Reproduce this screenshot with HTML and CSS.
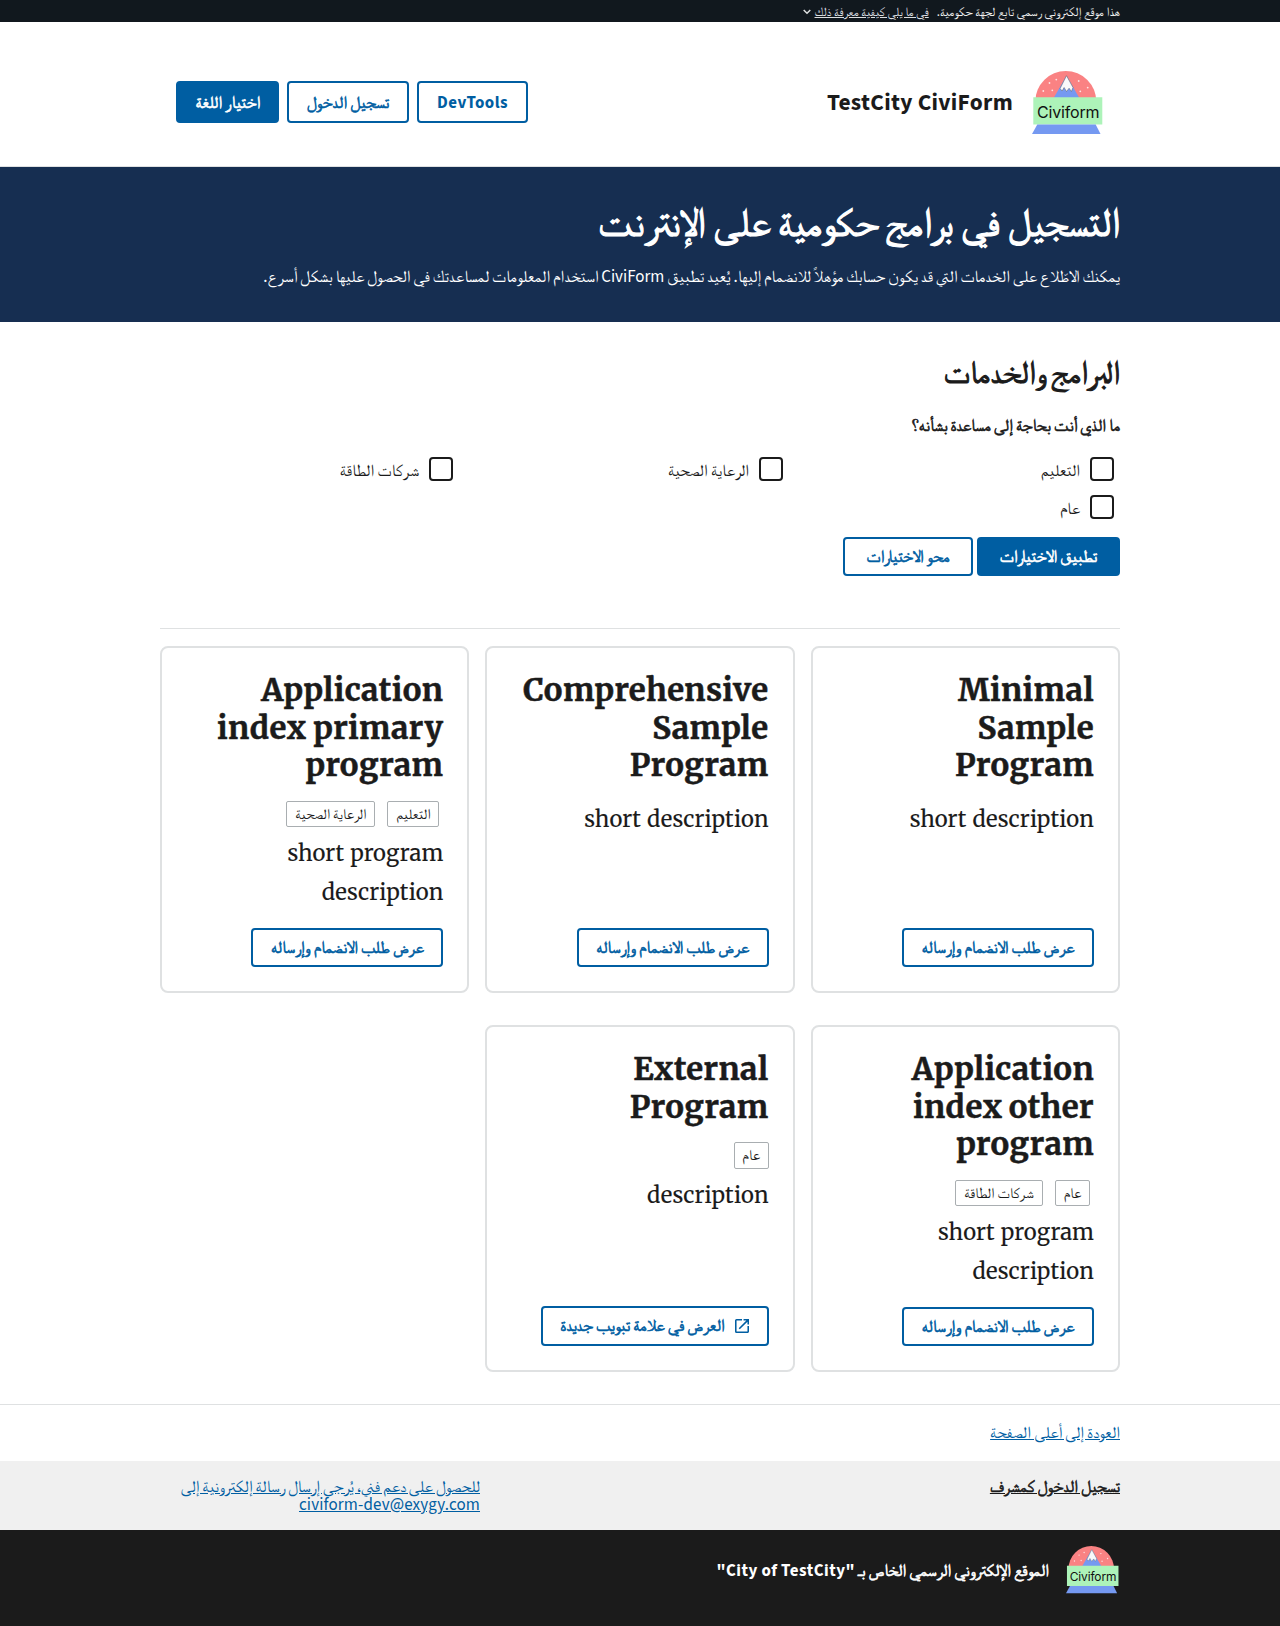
FILE: index.html
```html
<!DOCTYPE html>
<html lang="ar" dir="rtl">
<head>
<meta charset="utf-8">
<title>TestCity CiviForm</title>
<link rel="stylesheet" href="styles.css">
</head>
<body>
<svg width="0" height="0" class="defs" aria-hidden="true">
  <symbol id="logo" viewBox="0 0 71 64">
    <path d="M3.300 30.500a30.500 30.500 0 0 1 61 0z" fill="#fa8283"/>
    <path d="M34.500 4.700 48.500 29h-28z" fill="#7599f1"/>
    <path d="M34.500 4.700 41 16.500l-1.600 4-2.300-3.300-2.600 3.300-2.400-4-2 3.500-2-2.500z" fill="#f8f8fa" stroke="#555b66" stroke-width=".5"/>
    <g fill="#fde4e4"><circle cx="17.500" cy="12" r=".9"/><circle cx="24.300" cy="8.600" r=".9"/><circle cx="11.300" cy="20" r=".9"/><circle cx="20.300" cy="19.300" r=".9"/><circle cx="46.700" cy="10" r=".9"/><circle cx="55.700" cy="16.600" r=".9"/><circle cx="48.300" cy="20.300" r=".9"/></g>
    <path d="M1.300 26.300h69v27.200h-69z" fill="#adf3b9"/>
    <path d="M5.300 53.500h58.400l4.800 9.500H0z" fill="#7599f1"/>
    <text x="5" y="46.800" textLength="62.500" class="logo-text" direction="ltr">Civiform</text>
  </symbol>
</svg>

<div class="gov-banner"><div class="container">
  <span class="t-gov">هذا موقع إلكتروني رسمي تابع لجهة حكومية.</span>
  <a class="t-how">في ما يلي كيفية معرفة ذلك</a>
  <svg class="chev" viewBox="0 0 8 6"><path d="M.7 1 4 4.300 7.300 1" fill="none" stroke="#dfe1e2" stroke-width="1.500"/></svg>
</div></div>

<header class="header"><div class="container">
  <svg class="logo"><use href="#logo"/></svg>
  <span class="brand">TestCity CiviForm</span>
  <nav class="nav">
    <a class="btn nav-dev">DevTools</a>
    <a class="btn strong nav-login">تسجيل الدخول</a>
    <a class="btn strong primary nav-lang">اختيار اللغة</a>
  </nav>
</div></header>

<section class="hero"><div class="container">
  <h1>التسجيل في برامج حكومية على الإنترنت</h1>
  <p>يمكنك الاطّلاع على الخدمات التي قد يكون حسابك مؤهلاً للانضمام إليها. يُعيد تطبيق CiviForm استخدام المعلومات لمساعدتك في الحصول عليها بشكل أسرع.</p>
</div></section>

<main class="container main">
  <h2>البرامج والخدمات</h2>
  <p class="legend strong">ما الذي أنت بحاجة إلى مساعدة بشأنه؟</p>
  <div class="checks">
    <label><i></i><span>التعليم</span></label>
    <label><i></i><span>الرعاية الصحية</span></label>
    <label><i></i><span>شركات الطاقة</span></label>
    <label><i></i><span>عام</span></label>
  </div>
  <div class="actions">
    <a class="btn strong primary apply">تطبيق الاختيارات</a>
    <a class="btn strong clear">محو الاختيارات</a>
  </div>
  <div class="cards">
    <article class="card">
      <h3>Minimal<br>Sample<br>Program</h3>
      <p class="desc spaced">short description</p>
      <a class="btn strong view">عرض طلب الانضمام وإرساله</a>
    </article>
    <article class="card">
      <h3>Comprehensive<br>Sample<br>Program</h3>
      <p class="desc spaced">short description</p>
      <a class="btn strong view">عرض طلب الانضمام وإرساله</a>
    </article>
    <article class="card">
      <h3>Application<br>index primary<br>program</h3>
      <div class="tags"><span class="tag edu">التعليم</span><span class="tag health">الرعاية الصحية</span></div>
      <p class="desc">short program<br>description</p>
      <a class="btn strong view">عرض طلب الانضمام وإرساله</a>
    </article>
    <article class="card">
      <h3>Application<br>index other<br>program</h3>
      <div class="tags"><span class="tag general">عام</span><span class="tag energy">شركات الطاقة</span></div>
      <p class="desc">short program<br>description</p>
      <a class="btn strong view">عرض طلب الانضمام وإرساله</a>
    </article>
    <article class="card">
      <h3>External<br>Program</h3>
      <div class="tags single"><span class="tag general">عام</span></div>
      <p class="desc">description</p>
      <a class="btn strong view external"><svg class="launch" viewBox="3 3 18 18"><path fill="#005ea2" d="M19 19H5V5h7V3H5a2 2 0 0 0-2 2v14a2 2 0 0 0 2 2h14c1.100 0 2-.9 2-2v-7h-2v7zM14 3v2h3.590l-9.830 9.830 1.410 1.410L19 6.410V10h2V3h-7z"/></svg><span>العرض في علامة تبويب جديدة</span></a>
    </article>
  </div>
</main>

<footer>
  <div class="top-link"><div class="container"><a>العودة إلى أعلى الصفحة</a></div></div>
  <div class="support"><div class="container">
    <div class="admin"><a class="strong">تسجيل الدخول كمشرف</a></div>
    <a class="mail">للحصول على دعم فني، يُرجى إرسال رسالة إلكترونية إلى<br><bdi>civiform-dev@exygy.com</bdi></a>
  </div></div>
  <div class="identity"><div class="container">
    <svg class="logo small"><use href="#logo"/></svg>
    <span class="strong">الموقع الإلكتروني الرسمي الخاص بـ <b>"City of TestCity"</b></span>
  </div></div>
</footer>
</body>
</html>
```
FILE: styles.css
```css
* { box-sizing: border-box; }
body {
  margin: 0;
  background: #fff;
  color: #1b1b1b;
  font-family: "Source Sans 3", FreeSerif, "Noto Naskh Arabic", serif;
  font-size: 16.96px;
}
h1, h2, h3, p { margin: 0; }
a { white-space: nowrap; }
.defs { position: absolute; }
.container { width: 960px; margin: 0 auto; }
.logo-text { font-family: Inter, sans-serif; font-size: 16px; font-weight: 400; fill: #111; }

/* Arabic emphasis keeps the regular outlines and thickens them */
.strong { font-weight: 400; -webkit-text-stroke: .6px currentColor; word-spacing: -.3px; }
.strong b { -webkit-text-stroke: 0; letter-spacing: .5px; }

.gov-banner { height: 22px; background: #11181e; color: #f0f0f0; font-size: 12.9px; line-height: 24px; overflow: hidden; }
.gov-banner .container { display: flex; align-items: center; gap: 8px; white-space: nowrap; }
.t-how { text-decoration: underline; color: #dcdee0; }
.chev { width: 8px; height: 6px; margin-right: -4px; }

.header { height: 145px; border-bottom: 1px solid #dfe1e2; }
.header .container { display: flex; height: 100%; align-items: flex-start; }
.logo { width: 71px; height: 64px; margin: 49px 17px 0 0; }
.brand { font-size: 23.4px; font-weight: 700; line-height: 30px; margin: 66px 19px 0 0; letter-spacing: .3px; white-space: nowrap; }
.nav { display: flex; gap: 8px; margin: 59px auto 0 16px; }
.btn {
  display: inline-flex; align-items: center; justify-content: center;
  border: 2px solid #005ea2; border-radius: 4px; color: #005ea2;
  line-height: 20px; height: 39px; white-space: nowrap;
}
.primary { background: #005ea2; color: #fff; }
.nav .btn { height: 42px; padding-top: 2px; }
.nav-dev { width: 111px; font-weight: 700; letter-spacing: .45px; }
.nav-login { width: 122px; }
.nav-lang { width: 103px; }

.hero { height: 155px; background: #162e51; color: #fff; padding-top: 32px; }
.hero h1 { font-size: 39.6px; font-weight: 400; -webkit-text-stroke: 1.200px currentColor; line-height: 50px; white-space: nowrap; }
.hero p { line-height: 24px; margin-top: 16px; word-spacing: -.5px; white-space: nowrap; }

.main { padding-top: 32px; }
h2 { font-size: 31.6px; font-weight: 400; -webkit-text-stroke: 1px currentColor; line-height: 40px; }
.legend { line-height: 24px; margin-top: 20px; }
.checks { display: grid; grid-template-columns: 331px 330px 1fr; grid-auto-rows: 24px; row-gap: 14px; margin-top: 19px; }
.checks label { display: flex; align-items: center; padding-right: 6px; gap: 10px; }
.checks i { width: 24px; height: 24px; border: 2px solid #1b1b1b; border-radius: 4px; }
.checks span { line-height: 20px; padding-top: 4px; }
.actions { display: flex; gap: 4px; margin-top: 18px; }
.apply { width: 143px; }
.clear { width: 130px; }
.cards {
  display: grid; grid-template-columns: repeat(3, 1fr); grid-auto-rows: 347px;
  column-gap: 16px; row-gap: 32px; margin-top: 52px; border-top: 1px solid #dfe1e2; padding-top: 17px;
}
.card { display: flex; flex-direction: column; align-items: flex-start; border: 2px solid #dfe1e2; border-radius: 8px; padding: 24px; }
.card h3, .desc { font-family: Merriweather, "DejaVu Serif", serif; white-space: nowrap; }
.card h3 { font-size: 31.2px; line-height: 37.6px; letter-spacing: .45px; word-spacing: -1.5px; margin-left: -8px; -webkit-text-stroke: .5px currentColor; }
.desc { font-size: 22px; line-height: 39px; margin-top: 7.5px; letter-spacing: .1px; word-spacing: .8px; -webkit-text-stroke: .1px currentColor; }
.spaced { margin-top: 15.5px; }
.tags { display: flex; gap: 12px; margin: 16px 4px 0 0; }
.tag { height: 26px; border: 1px solid #a9aeb1; border-radius: 2px; font-size: 14.88px; line-height: 26px; text-align: center; white-space: nowrap; }
.single { margin-right: 0; }
.single .tag { height: 27px; }
.single + .desc { margin-top: 6.5px; }
.edu { width: 52px; }
.health { width: 89px; }
.general { width: 35px; }
.energy { width: 88px; }
.view { width: 192px; margin-top: auto; }
.external { width: 228px; height: 40px; gap: 10px; }
.launch { width: 14px; height: 14px; }

.top-link { border-top: 1px solid #dfe1e2; margin-top: 32px; height: 57px; padding-top: 16px; line-height: 24px; }
.top-link a, .mail { color: #005ea2; text-decoration: underline; }
.support { background: #f0f0f0; height: 69px; padding-top: 17px; }
.support .container { display: flex; line-height: 18px; }
.admin { width: 640px; }
.admin a { text-decoration: underline; }
.mail { word-spacing: -.5px; }
.mail bdi { letter-spacing: .15px; }
.identity { background: #1b1b1b; color: #fff; height: 96px; }
.identity .container { display: flex; padding-top: 16px; }
.identity .small { width: 53px; height: 48px; margin: 0 1px 0 0; }
.identity span { margin: 13px 17px 0 0; line-height: 24px; white-space: nowrap; }
```
